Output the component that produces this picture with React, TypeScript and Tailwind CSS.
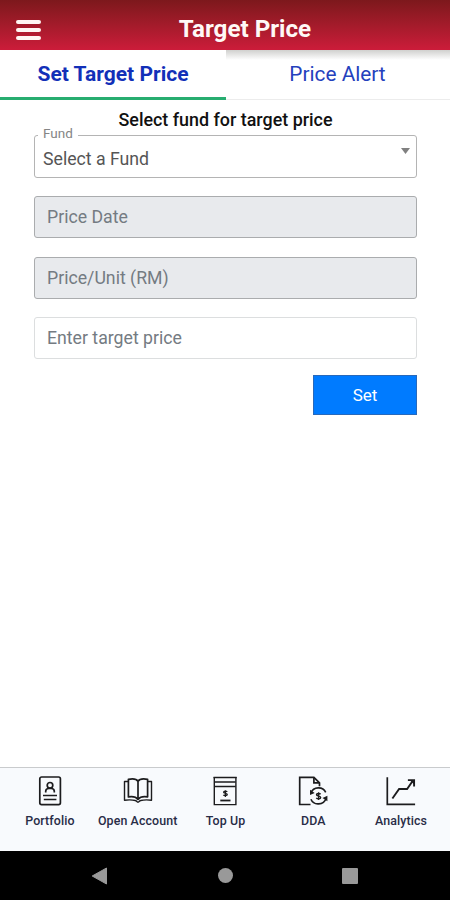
import React from "react";

const stroke = {
  fill: "none",
  stroke: "#1c1c1e",
  strokeWidth: 1.7,
} as const;

function PortfolioIcon() {
  return (
    <svg width="30" height="30" viewBox="0 0 30 30" {...stroke}>
      <rect x="4.8" y="1" width="20.6" height="27.6" rx="1.8" />
      <circle cx="15" cy="9.3" r="2.8" />
      <path d="M10.700 16.600v-1.400c0-1.700 1.400-2.700 3-2.700h2.600c1.600 0 3 1 3 2.700v1.400" />
      <path d="M8 19.400h14M8.800 23.600h12.600" strokeWidth="1.500" />
    </svg>
  );
}

function BookIcon() {
  return (
    <svg width="30" height="30" viewBox="0 0 30 30" {...stroke} strokeLinejoin="round">
      <path d="M15 5.400C13.500 2.900 9.300 2.600 5.400 3.400v17.500c4-.7 7.700 0 9.600 2.500 1.900-2.500 5.600-3.200 9.600-2.500V3.400C20.700 2.600 16.500 2.900 15 5.400v18" />
      <path d="M5.400 5.500H1.500v18.700c3.700-.5 7.700-.5 10.900.300 1 .2 1.400 1.700 2.600 1.700s1.600-1.500 2.600-1.700c3.200-.8 7.200-.8 10.900-.3V5.500h-3.900" strokeWidth="1.400" />
    </svg>
  );
}

function TopUpIcon() {
  return (
    <svg width="30" height="30" viewBox="0 0 30 30" {...stroke}>
      <path d="M3.500 1.500h23.200M4.500 6h21.200M4.500 10.500h21.200" />
      <path d="M4.300 1v27.600h21.600V1" strokeWidth="1.400" />
      <path d="M17.200 15.800c-.5-.7-3.600-1-3.600.5 0 1.600 3.700.6 3.700 2.200s-3.300 1.300-3.900.4M15.400 14.200v6.700" strokeWidth="1.300" />
      <path d="M10.300 24.500h10.200" strokeWidth="1.800" />
    </svg>
  );
}

function DdaIcon() {
  return (
    <svg width="30" height="30" viewBox="0 0 30 30" {...stroke}>
      <path d="M12.500 28.500H1.700V1.400h14.200l5.600 5.500v3.300" />
      <path d="M15.900 1.400v5.500h5.600" />
      <path d="M13 16.900c2.300-6.300 11.800-6.800 14.700-.6M28.200 22.200c-2.500 7-12.400 7.800-15.300 1.100" strokeWidth="1.600" />
      <path d="M12 13.800v5.100l4.700-1.800zM29.400 25.200v-5.500l-4.900 2.200z" fill="#1c1c1e" stroke="none" />
      <path d="M22.600 18.200c-.8-1-4.100-1.100-4.100.6 0 1.800 4.200.8 4.200 2.700s-3.500 1.700-4.400.4M20.600 16.200v7.900" strokeWidth="1.400" />
    </svg>
  );
}

function AnalyticsIcon() {
  return (
    <svg width="30" height="30" viewBox="0 0 30 30" {...stroke}>
      <path d="M1.300 1.200v27.200h27.800" />
      <path d="M6.400 22.500l6.700-9.500h8l5.700-8.200" strokeWidth="1.900" />
      <path d="M21.900 4.100h6.200v6.300" strokeWidth="1.900" />
      <path d="M23.600 4.100h4.500v4.500z" fill="#1c1c1e" stroke="none" />
    </svg>
  );
}

const navItems = [
  { label: "Portfolio", Icon: PortfolioIcon },
  { label: "Open Account", Icon: BookIcon },
  { label: "Top Up", Icon: TopUpIcon },
  { label: "DDA", Icon: DdaIcon },
  { label: "Analytics", Icon: AnalyticsIcon },
];

export default function App() {
  return (
    <div className="flex h-[900px] w-[450px] flex-col overflow-hidden bg-white font-[Roboto,sans-serif] whitespace-nowrap">
      <header className="grid h-[50px] shrink-0 grid-cols-[60px_1fr_20px] items-center bg-linear-to-b from-[#7d181c] to-[#cc1c3a] pt-[9px]">
        <button aria-label="Menu" className="ml-4 flex w-[25px] flex-col gap-1">
          <span className="h-1 rounded-xs bg-[#fff6f4]" />
          <span className="h-1 rounded-xs bg-[#fff6f4]" />
          <span className="h-1 rounded-xs bg-[#fff6f4]" />
        </button>
        <h1 className="pb-[2px] text-center text-[24.2px] leading-7 font-bold text-[#fff8f6]">Target Price</h1>
      </header>

      <div className="flex h-[50px] shrink-0">
        <button className="w-[226px] border-b-[3px] border-[#27ad70] pt-[3px] text-[21px] font-bold text-[#1230b8]">Set Target Price</button>
        <button className="flex-1 border-b border-[#ececec] bg-linear-to-b from-[#d0d0ce] to-white to-[10px] pt-px pr-px text-[20.8px] text-[#2441bd]">Price Alert</button>
      </div>

      <main className="flex flex-1 flex-col pt-[9px] pr-[33px] pl-[34px]">
        <h2 className="text-center text-[17.9px] leading-[22px] font-medium text-[#111]">Select fund for target price</h2>
        <fieldset className="-mt-[5px] h-[52px] rounded-[3px] border border-[#b4b4b4] pr-[6px] pl-[3px]">
          <legend className="h-[19px] px-[5px] text-[13.5px] leading-[15px] text-[#858585]">Fund</legend>
          <div className="flex justify-between pl-[5px] text-[17.7px] leading-[28px] text-[#555]">
            <span>Select a Fund</span>
            <svg className="mt-[3px]" width="9" height="6" viewBox="0 0 9 6">
              <path d="M0 0h9L4.500 6z" fill="#808080" />
            </svg>
          </div>
        </fieldset>
        <div className="mt-[18px] flex h-[42px] items-center rounded-[3px] border border-[#aaacae] bg-[#e8eaed] px-[12px] text-[17.7px] text-[#747b82]">Price Date</div>
        <div className="mt-[19px] flex h-[42px] items-center rounded-[3px] border border-[#aaacae] bg-[#e8eaed] px-[12px] text-[17.7px] text-[#747b82]">Price/Unit (RM)</div>
        <div className="mt-[18px] flex h-[42px] items-center rounded-[3px] border border-[#dcdedf] px-[12px] text-[17.7px] text-[#747b82]">Enter target price</div>
        <button className="mt-[16px] h-10 w-[104px] self-end border border-[#2869bb] bg-[#007bff] pt-[2px] text-[17px] text-white">Set</button>
      </main>

      <nav className="flex h-[84px] shrink-0 border-t border-[#c9cbcd] bg-[#f8fafd] pr-[5px] pl-[6px] pt-2">
        {navItems.map(({ label, Icon }) => (
          <div key={label} className="flex flex-1 flex-col items-center">
            <Icon />
            <span className="mt-[7px] text-[12.4px] leading-4 font-medium tracking-[0.1px] text-[#292c47]">{label}</span>
          </div>
        ))}
      </nav>

      <footer className="flex h-[49px] shrink-0 items-center justify-between bg-black pr-[92px] pl-[91px]">
        <svg width="17" height="18" viewBox="0 0 17 18"><path d="M1.200 9L15.500 1v16z" fill="#999" stroke="#999" strokeLinejoin="round" /></svg>
        <span className="size-[15px] rounded-full bg-[#999]" />
        <span className="size-4 rounded-[1px] bg-[#999]" />
      </footer>
    </div>
  );
}
